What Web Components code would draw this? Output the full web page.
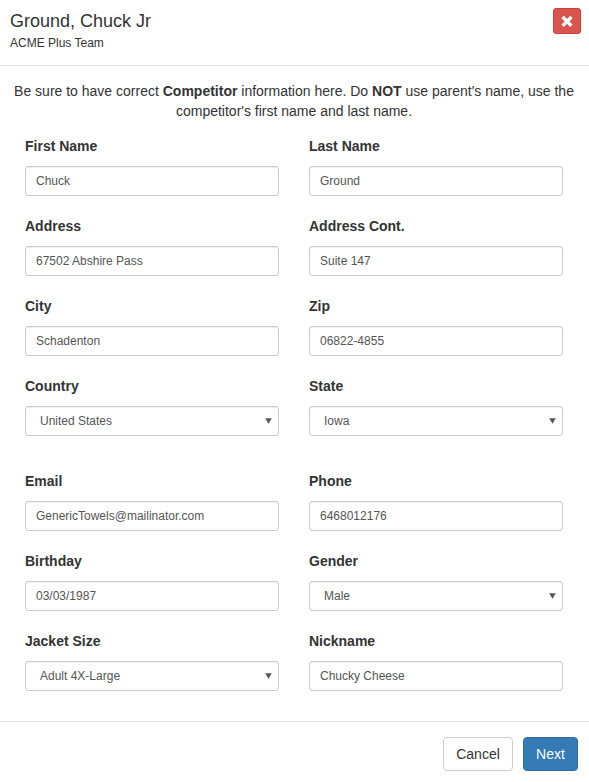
<!DOCTYPE html>
<html lang="en">
<head>
<meta charset="utf-8">
<title>Competitor</title>
<style>
html,body{margin:0;padding:0;background:#fff}
body{font:14px/20px "Liberation Sans",Arial,sans-serif;color:#333}
</style>
</head>
<body>
<competitor-modal>
  <span slot="title">Ground, Chuck Jr</span>
  <span slot="subtitle">ACME Plus Team</span>
  <span slot="intro">Be sure to have correct <b>Competitor</b> information here. Do <b>NOT</b> use parent's name, use the<br>competitor's first name and last name.</span>
  <form-field label="First Name" value="Chuck"></form-field>
  <form-field label="Last Name" value="Ground"></form-field>
  <form-field label="Address" value="67502 Abshire Pass"></form-field>
  <form-field label="Address Cont." value="Suite 147"></form-field>
  <form-field label="City" value="Schadenton"></form-field>
  <form-field label="Zip" value="06822-4855"></form-field>
  <form-field label="Country" value="United States" select spaced></form-field>
  <form-field label="State" value="Iowa" select spaced></form-field>
  <form-field label="Email" value="GenericTowels@mailinator.com"></form-field>
  <form-field label="Phone" value="6468012176"></form-field>
  <form-field label="Birthday" value="03/03/1987"></form-field>
  <form-field label="Gender" value="Male" select></form-field>
  <form-field label="Jacket Size" value="Adult 4X-Large" select></form-field>
  <form-field label="Nickname" value="Chucky Cheese"></form-field>
</competitor-modal>
<script>
class FormField extends HTMLElement{
  constructor(){
    super();
    const r=this.attachShadow({mode:'open'});
    const sel=this.hasAttribute('select');
    const esc=s=>(s||'').replace(/&/g,'&amp;').replace(/</g,'&lt;');
    r.innerHTML=`<style>
      :host{display:block;margin-bottom:20px}
      :host([spaced]){margin-bottom:35px}
      .label{display:block;font-weight:700;font-size:14px;line-height:20px;margin-bottom:10px;color:#333}
      .box{box-sizing:border-box;height:30px;border:1px solid #ccc;border-radius:3px;background:#fff;
        box-shadow:inset 0 1px 1px rgba(0,0,0,.075);display:flex;align-items:center;justify-content:space-between;
        padding:0 10px;font-size:12px;line-height:18px;color:#555;white-space:nowrap}
      .box.sel{padding:0 6px 0 14px}
      svg{display:block;width:7px;height:6px}
    </style>
    <span class="label">${esc(this.getAttribute('label'))}</span>
    <div class="box ${sel?'sel':''}"><span>${esc(this.getAttribute('value'))}</span>${sel?'<svg viewBox="0 0 7 6"><path d="M.2 .3h6.6L3.5 5.8z" fill="#555"/></svg>':''}</div>`;
  }
}
customElements.define('form-field',FormField);
class CompetitorModal extends HTMLElement{
  constructor(){
    super();
    this.attachShadow({mode:'open'}).innerHTML=`<style>
      :host{display:block;width:589px;height:782px;overflow:hidden;background:#fff}
      header{box-sizing:border-box;height:66px;border-bottom:1px solid #e5e5e5;padding:11px 8px 0 10px;display:flex;justify-content:space-between;align-items:flex-start}
      .title{font-size:18px;line-height:20px;color:#333}
      .sub{font-size:12px;line-height:17px;margin-top:3.5px;color:#333}
      .close{box-sizing:border-box;width:28px;height:26px;margin-top:-3px;background:#d9534f;border:1px solid #d43f3a;border-radius:3px;display:flex;align-items:center;justify-content:center;padding:1px 0 0}
      .close svg{width:16px;height:16px;display:block}
      main{padding:15px 11px 0 10px}
      .intro{text-align:center;margin-bottom:15px}
      .grid{display:grid;grid-template-columns:254px 254px;column-gap:30px;padding:0 15px}
      footer{box-sizing:border-box;border-top:1px solid #e5e5e5;margin-top:10px;padding:15px 11px;display:flex;justify-content:flex-end;gap:10px}
      .btn{box-sizing:border-box;height:34px;font:14px/20px "Liberation Sans",Arial,sans-serif;border-radius:4px;border:1px solid #ccc;background:#fff;color:#333;padding:0 12px}
      .cancel{width:70px;padding:0}
      .next{width:55px;padding:0;background:#337ab7;border-color:#2e6da4;color:#fff}
    </style>
    <header>
      <div><div class="title"><slot name="title"></slot></div><div class="sub"><slot name="subtitle"></slot></div></div>
      <button class="close" aria-label="Close"><svg viewBox="0 0 1408 1792"><path fill="#fff" d="M1298 1188q0 40-28 68l-136 136q-28 28-68 28t-68-28l-294-294-294 294q-28 28-68 28t-68-28l-136-136q-28-28-28-68t28-68l294-294-294-294q-28-28-28-68t28-68l136-136q28-28 68-28t68 28l294 294 294-294q28-28 68-28t68 28l136 136q28 28 28 68t-28 68l-294 294 294 294q28 28 28 68z"/></svg></button>
    </header>
    <main>
      <div class="intro"><slot name="intro"></slot></div>
      <div class="grid"><slot></slot></div>
    </main>
    <footer><button class="btn cancel">Cancel</button><button class="btn next">Next</button></footer>`;
  }
}
customElements.define('competitor-modal',CompetitorModal);
</script>
</body>
</html>
